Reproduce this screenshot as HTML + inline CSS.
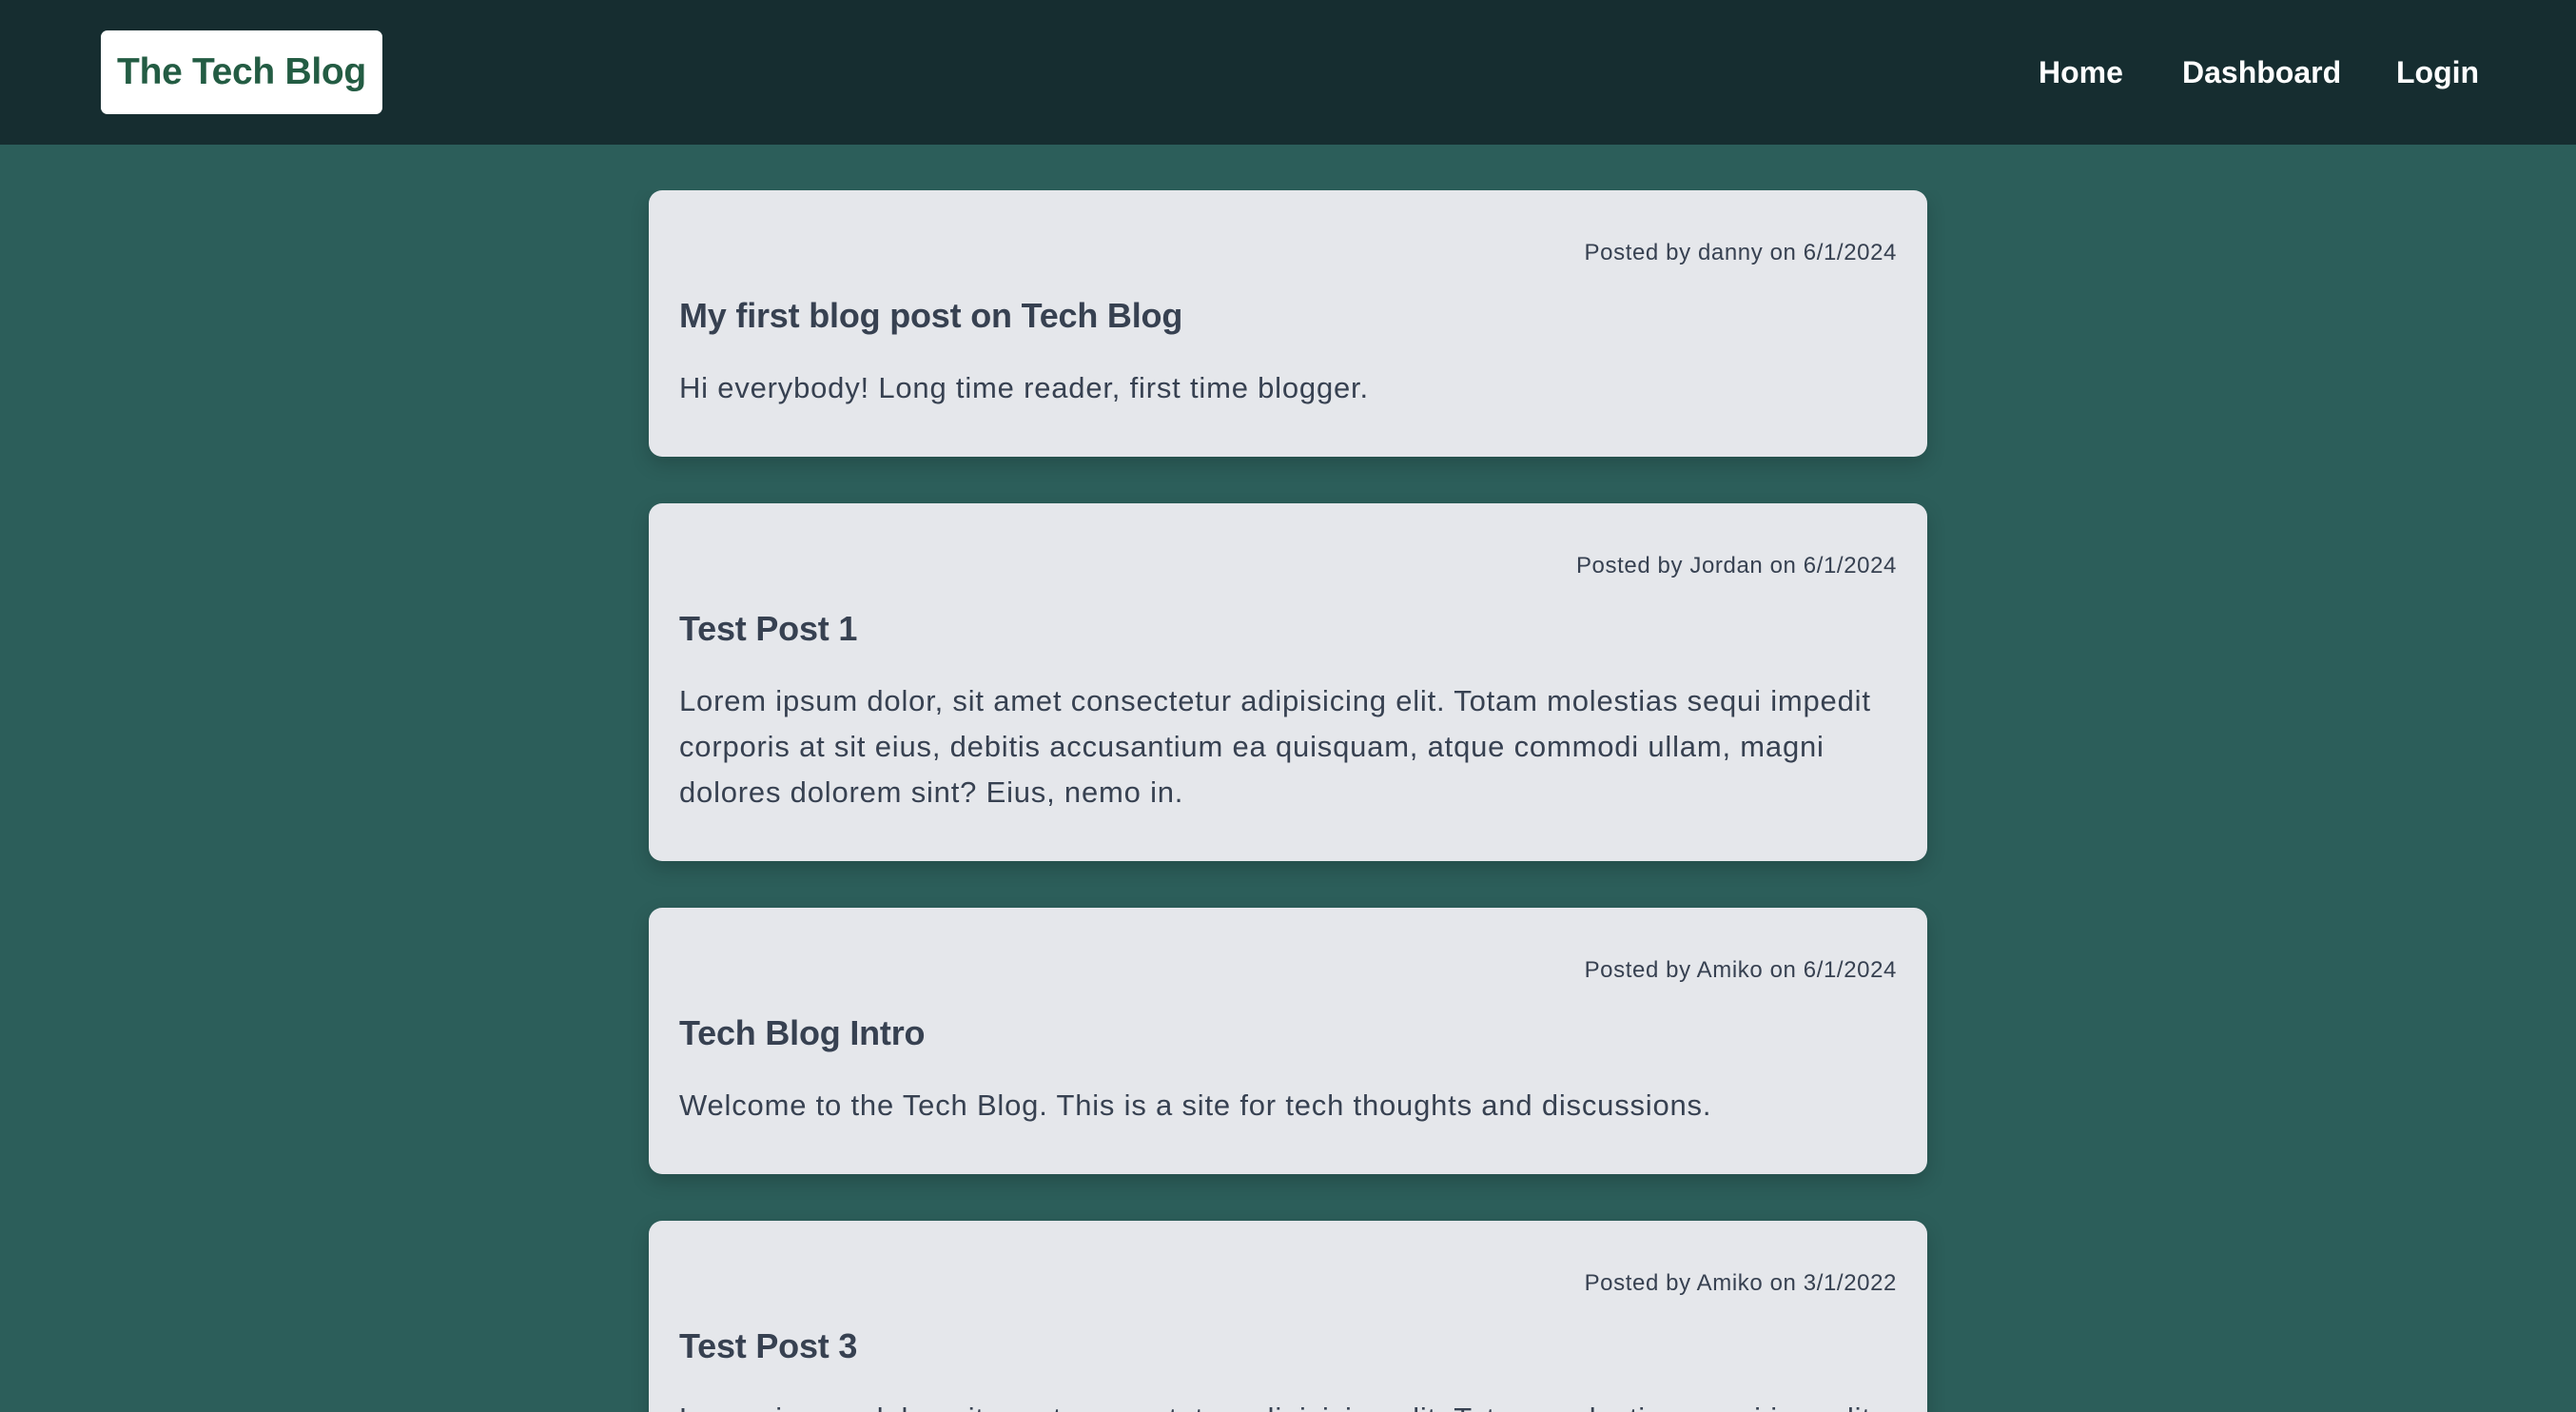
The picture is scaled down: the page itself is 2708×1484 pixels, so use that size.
<!DOCTYPE html>
<html><head><meta charset="utf-8"><style>
*{box-sizing:border-box;margin:0;padding:0}
html,body{width:2708px;height:1484px;overflow:hidden}
body{background:#2c5e5a;font-family:"Liberation Sans",Arial,sans-serif;color:#374151}
#wrap{position:relative;width:2708px;height:1484px;overflow:hidden}
header{height:152px;background:#162d30;position:relative}
.logo{position:absolute;left:106px;top:32px;width:296px;height:88px;background:#fff;border-radius:7px;color:#235c43;font-weight:bold;font-size:39px;line-height:88px;text-align:center;letter-spacing:-0.3px}
nav a{position:absolute;top:52px;color:#fff;font-size:32px;line-height:48px;text-decoration:none;font-weight:600}
main{position:absolute;left:662px;top:200px;width:1384px;height:1284px;overflow:hidden;padding:0 20px}
.card{background:#e5e7eb;border-radius:14px;padding:48px 32px 48px;margin-bottom:49px;box-shadow:0 8px 20px rgba(0,0,0,.18)}
.meta{text-align:right;font-size:24px;line-height:36px;height:36px;letter-spacing:0.6px}
h2{font-size:36px;line-height:48px;margin-top:24px;font-weight:bold;letter-spacing:-0.2px}
p{font-size:31px;line-height:48px;margin-top:28px;letter-spacing:0.8px}
</style></head><body><div id="wrap">
<header><div class="logo">The Tech Blog</div>
<nav><a style="left:2143px">Home</a><a style="left:2294px">Dashboard</a><a style="left:2519px">Login</a></nav></header>
<main>
<div class="card"><div class="meta">Posted by danny on 6/1/2024</div><h2>My first blog post on Tech Blog</h2><p>Hi everybody! Long time reader, first time blogger.</p></div>
<div class="card"><div class="meta">Posted by Jordan on 6/1/2024</div><h2>Test Post 1</h2><p>Lorem ipsum dolor, sit amet consectetur adipisicing elit. Totam molestias sequi impedit corporis at sit eius, debitis accusantium ea quisquam, atque commodi ullam, magni dolores dolorem sint? Eius, nemo in.</p></div>
<div class="card"><div class="meta">Posted by Amiko on 6/1/2024</div><h2>Tech Blog Intro</h2><p>Welcome to the Tech Blog. This is a site for tech thoughts and discussions.</p></div>
<div class="card"><div class="meta">Posted by Amiko on 3/1/2022</div><h2>Test Post 3</h2><p>Lorem ipsum dolor, sit amet consectetur adipisicing elit. Totam molestias sequi impedit corporis at sit eius, debitis accusantium ea quisquam.</p></div>
</main>
</div></body></html>
